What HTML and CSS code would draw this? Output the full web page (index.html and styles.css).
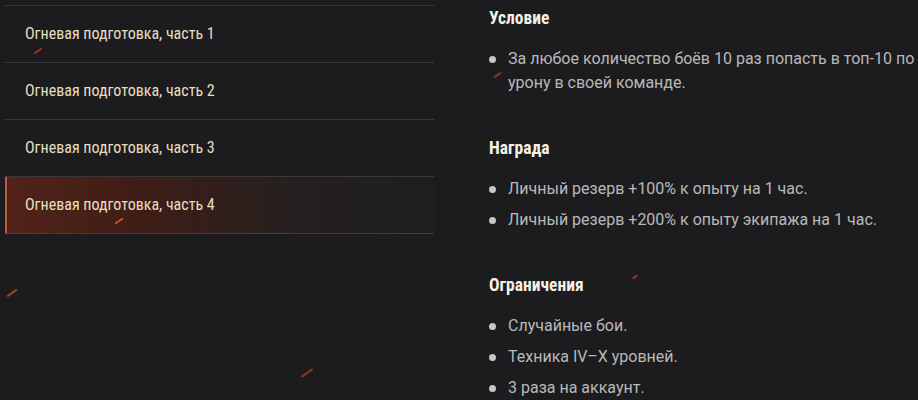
FILE: index.html
```html
<!DOCTYPE html>
<html>
<head>
  <meta charset="utf-8">
  <title>Огневая подготовка</title>
  <link rel="stylesheet" href="styles.css">
</head>
<body>
  <div class="sparks">
    <span class="spark s1"></span>
    <span class="spark s2"></span>
    <span class="spark s3"></span>
    <span class="spark s4"></span>
    <span class="spark s5"></span>
    <span class="spark s6"></span>
  </div>
  <div class="page">
    <ul class="missions">
      <li class="mission">Огневая подготовка, часть 1</li>
      <li class="mission">Огневая подготовка, часть 2</li>
      <li class="mission">Огневая подготовка, часть 3</li>
      <li class="mission active">Огневая подготовка, часть 4</li>
    </ul>
    <div class="details">
      <div class="block">
        <h2>Условие</h2>
        <ul class="list">
          <li>За любое количество боёв 10 раз попасть в топ-10 по урону в своей команде.</li>
        </ul>
      </div>
      <div class="block">
        <h2>Награда</h2>
        <ul class="list">
          <li>Личный резерв +100% к опыту на 1 час.</li>
          <li>Личный резерв +200% к опыту экипажа на 1 час.</li>
        </ul>
      </div>
      <div class="block">
        <h2>Ограничения</h2>
        <ul class="list">
          <li>Случайные бои.</li>
          <li>Техника IV–X уровней.</li>
          <li>3 раза на аккаунт.</li>
        </ul>
      </div>
    </div>
  </div>
</body>
</html>
```

FILE: styles.css
```css
html {
  background-color: #1c1c1e;
}

body {
  margin: 0;
  font-family: Roboto, "Liberation Sans", sans-serif;
  color: #b9b9b9;
  overflow: hidden;
  height: 400px;
}

.page {
  display: flex;
  padding-left: 5px;
}

.missions {
  list-style: none;
  margin: 5px 0 0;
  padding: 0;
  width: 430px;
  border-top: 1px solid #38383a;
}

.mission {
  height: 56px;
  line-height: 56px;
  padding-left: 20px;
  border-bottom: 1px solid #38383a;
  font-family: "Roboto Condensed", "Liberation Sans Narrow", Roboto, sans-serif;
  font-size: 16px;
  color: #e9dfc0;
}

.mission.active {
  border-left: 2px solid #c1593a;
  padding-left: 18px;
  background: linear-gradient(90deg, #52231a 0%, #3f1d16 30%, #26201f 65%, #1e1e1f 100%);
  border-bottom-color: #4a3a36;
}

.details {
  margin-left: 55px;
  width: 430px;
}

.block {
  padding-top: 6px;
  margin-bottom: 35px;
}

.block:last-child {
  margin-bottom: 0;
}

h2 {
  margin: 0 0 17px;
  font-family: "Roboto Condensed", "Liberation Sans Narrow", Roboto, sans-serif;
  font-size: 17.5px;
  line-height: 24px;
  font-weight: bold;
  color: #f5f1e6;
}

.list {
  list-style: none;
  margin: 0;
  padding: 0;
}

.list li {
  position: relative;
  padding-left: 19px;
  font-size: 16px;
  line-height: 24px;
  margin-bottom: 7px;
}

.list li:last-child {
  margin-bottom: 0;
}

.list li::before {
  content: "";
  position: absolute;
  left: 0;
  top: 9px;
  width: 7px;
  height: 7px;
  border-radius: 50%;
  background-color: #c8c8c0;
}

/* decorative embers */
.sparks {
  position: absolute;
  left: 0;
  top: 0;
  width: 918px;
  height: 400px;
  overflow: hidden;
  pointer-events: none;
}

.spark {
  position: absolute;
  height: 2px;
  border-radius: 2px;
  background-color: #b23a22;
  transform: rotate(-35deg);
  opacity: 0.8;
}

.s1 { left: 33px; top: 50px; width: 10px; }
.s2 { left: 114px; top: 220px; width: 10px; background-color: #e0603a; }
.s3 { left: 6px; top: 292px; width: 12px; background-color: #c24a28; }
.s4 { left: 300px; top: 372px; width: 14px; }
.s5 { left: 493px; top: 74px; width: 9px; }
.s6 { left: 632px; top: 276px; width: 6px; }
```
